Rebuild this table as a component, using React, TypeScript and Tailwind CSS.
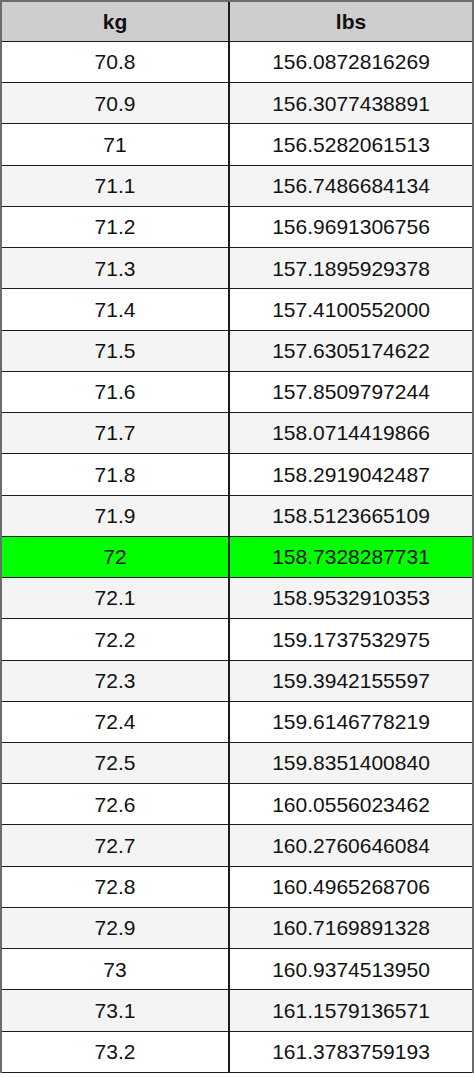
const rows: [string, string][] = [
  ["70.8", "156.0872816269"],
  ["70.9", "156.3077438891"],
  ["71", "156.5282061513"],
  ["71.1", "156.7486684134"],
  ["71.2", "156.9691306756"],
  ["71.3", "157.1895929378"],
  ["71.4", "157.4100552000"],
  ["71.5", "157.6305174622"],
  ["71.6", "157.8509797244"],
  ["71.7", "158.0714419866"],
  ["71.8", "158.2919042487"],
  ["71.9", "158.5123665109"],
  ["72", "158.7328287731"],
  ["72.1", "158.9532910353"],
  ["72.2", "159.1737532975"],
  ["72.3", "159.3942155597"],
  ["72.4", "159.6146778219"],
  ["72.5", "159.8351400840"],
  ["72.6", "160.0556023462"],
  ["72.7", "160.2760646084"],
  ["72.8", "160.4965268706"],
  ["72.9", "160.7169891328"],
  ["73", "160.9374513950"],
  ["73.1", "161.1579136571"],
  ["73.2", "161.3783759193"],
];

export default function App() {
  return (
    <div className="h-[1077px] w-[474px] bg-white font-['Liberation_Sans',Arial,sans-serif] text-[21px] text-[#111]">
      <div className="border-x-2 border-t-2 border-[#6b6b6b]">
        {/* Header */}
        <div className="grid h-[40px] grid-cols-[228px_1fr] border-b border-[#1c1c1c] bg-[#cecece] font-bold">
          <div className="flex items-center justify-center border-r-2 border-[#1c1c1c]">kg</div>
          <div className="flex items-center justify-center">lbs</div>
        </div>

        {/* Rows */}
        {rows.map(([kg, lbs], index) => {
          const highlight = kg === "72";
          const bg = highlight ? "bg-[#00ff00]" : index % 2 === 0 ? "bg-white" : "bg-[#f4f4f4]";
          return (
            <div
              key={kg}
              className={`grid h-[41.24px] grid-cols-[228px_1fr] border-b border-[#1c1c1c] ${bg}`}
            >
              <div className="flex items-center justify-center border-r-2 border-[#1c1c1c]">{kg}</div>
              <div className="flex items-center justify-center">{lbs}</div>
            </div>
          );
        })}
      </div>
    </div>
  );
}
